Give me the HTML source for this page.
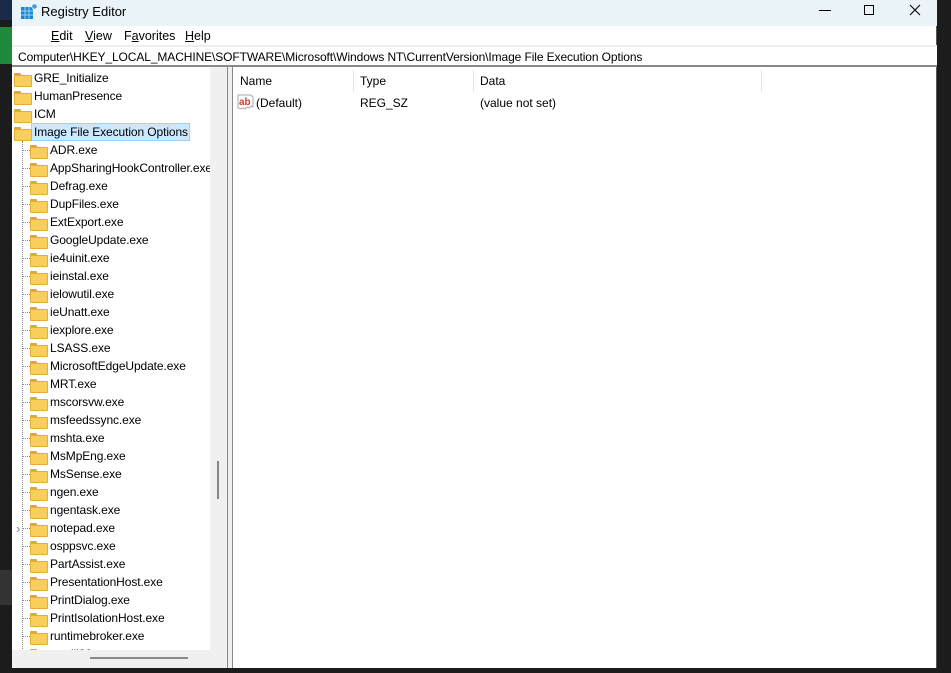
<!DOCTYPE html>
<html><head><meta charset="utf-8"><style>
*{margin:0;padding:0;box-sizing:border-box}
body{width:951px;height:673px;overflow:hidden;background:#1c1c1c;font-family:"Liberation Sans",sans-serif;font-size:12px;color:#000;position:relative}
.a{position:absolute}
.row{position:absolute;height:18px;line-height:18px;white-space:nowrap;letter-spacing:-0.1px}
.f{position:absolute;width:16px;height:12px;top:4px}
.f:before{content:"";position:absolute;left:0;top:0;width:7px;height:3px;background:#e0a82a;border-radius:1px 1px 0 0}
.f:after{content:"";position:absolute;left:0;top:2px;width:16px;height:10px;background:#f8cf5a;border:1px solid #e2ae38;border-radius:1px}
.dot{position:absolute;height:1px;width:7px;border-top:1px dotted #888}
</style></head><body>
<div class="a" style="left:0;top:0;width:12px;height:20px;background:#1a2a4a"></div>
<div class="a" style="left:0;top:27px;width:12px;height:37px;background:#1f8a3c"></div>
<div class="a" style="left:0;top:570px;width:12px;height:35px;background:#333"></div>
<div class="a" style="left:12px;top:0;width:925px;height:668px;background:#fff;border-right:1px solid #555"></div>
<div class="a" style="left:12px;top:0;width:925px;height:26px;background:#eaf3f7"></div>
<svg class="a" style="left:20px;top:3px" width="18" height="18" viewBox="0 0 18 18">
<rect x="1" y="4" width="12" height="12" fill="#1a86d0"/>
<path d="M1 8h12M1 12h12M5 4v12M9 4v12" stroke="#9fd3f5" stroke-width="1"/>
<circle cx="14.5" cy="3.5" r="2.8" fill="#3aa0e8" stroke="#fff" stroke-width="0.8"/>
</svg>
<div class="a" style="left:41px;top:4px;font-size:13px">Registry Editor</div>
<div class="a" style="left:819px;top:10px;width:12px;height:1px;background:#000"></div>
<div class="a" style="left:864px;top:5px;width:10px;height:10px;border:1px solid #000"></div>
<svg class="a" style="left:909px;top:4px" width="12" height="12"><path d="M1 1L11 11M11 1L1 11" stroke="#000" stroke-width="1.1"/></svg>
<div class="a" style="left:51px;top:29px;font-size:12.5px"><u>E</u>dit</div>
<div class="a" style="left:85px;top:29px;font-size:12.5px"><u>V</u>iew</div>
<div class="a" style="left:124px;top:29px;font-size:12.5px">F<u>a</u>vorites</div>
<div class="a" style="left:185px;top:29px;font-size:12.5px"><u>H</u>elp</div>
<div class="a" style="left:12px;top:45px;width:925px;height:22px;background:#fff;border-top:2px solid #eee;border-bottom:2px solid #888"></div>
<div class="a" style="left:18px;top:50px;font-size:12px;letter-spacing:-0.1px">Computer\HKEY_LOCAL_MACHINE\SOFTWARE\Microsoft\Windows NT\CurrentVersion\Image File Execution Options</div>
<div class="a" style="left:12px;top:67px;width:216px;height:601px;background:#f0f0f0"></div>
<div class="a" style="left:12px;top:67px;width:198px;height:583px;background:#fff;overflow:hidden" id="t">
<div class="a" style="left:10px;top:74px;height:510px;border-left:1px dotted #888"></div>
<div class="a" style="left:19px;top:56px;width:159px;height:18px;background:#cce8ff;border:1px solid #99d1ff"></div>
<div class="row" style="left:2px;top:2px"><span class="f" style="left:0"></span><span style="position:absolute;left:20px">GRE_Initialize</span></div>
<div class="row" style="left:2px;top:20px"><span class="f" style="left:0"></span><span style="position:absolute;left:20px">HumanPresence</span></div>
<div class="row" style="left:2px;top:38px"><span class="f" style="left:0"></span><span style="position:absolute;left:20px">ICM</span></div>
<div class="row" style="left:2px;top:56px"><span class="f" style="left:0"></span><span style="position:absolute;left:20px">Image File Execution Options</span></div>
</div>
<div class="a" style="left:217px;top:461px;width:2px;height:38px;background:#888"></div>
<div class="a" style="left:90px;top:657px;width:98px;height:2px;background:#888"></div>
<div class="a" style="left:227px;top:67px;width:1px;height:601px;background:#888"></div>
<div class="a" style="left:228px;top:67px;width:4px;height:601px;background:#f0f0f0"></div>
<div class="a" style="left:232px;top:67px;width:1px;height:601px;background:#888"></div>
<div class="a" style="left:240px;top:74px">Name</div>
<div class="a" style="left:353px;top:70px;width:1px;height:22px;background:#e5e5e5"></div>
<div class="a" style="left:360px;top:74px">Type</div>
<div class="a" style="left:473px;top:70px;width:1px;height:22px;background:#e5e5e5"></div>
<div class="a" style="left:480px;top:74px">Data</div>
<div class="a" style="left:761px;top:70px;width:1px;height:22px;background:#e5e5e5"></div>
<svg class="a" style="left:237px;top:94px" width="18" height="16" viewBox="0 0 18 16"><path d="M1 1h13l2 2v10l-2-1-2 2-2-1-2 2-2-1-2 1-3-1z" fill="#fff" stroke="#aaa"/><text x="2" y="11" font-family="Liberation Sans" font-size="10" font-weight="bold" fill="#d0402a">ab</text></svg>
<div class="a" style="left:256px;top:96px">(Default)</div>
<div class="a" style="left:360px;top:96px">REG_SZ</div>
<div class="a" style="left:480px;top:96px">(value not set)</div>
<script>
var n=["ADR.exe","AppSharingHookController.exe","Defrag.exe","DupFiles.exe","ExtExport.exe","GoogleUpdate.exe","ie4uinit.exe","ieinstal.exe","ielowutil.exe","ieUnatt.exe","iexplore.exe","LSASS.exe","MicrosoftEdgeUpdate.exe","MRT.exe","mscorsvw.exe","msfeedssync.exe","mshta.exe","MsMpEng.exe","MsSense.exe","ngen.exe","ngentask.exe","notepad.exe","osppsvc.exe","PartAssist.exe","PresentationHost.exe","PrintDialog.exe","PrintIsolationHost.exe","runtimebroker.exe","rundll32.exe"];
var t=document.getElementById('t'),h='';
n.forEach(function(s,i){var y=74+18*i;
h+='<div class="dot" style="left:11px;top:'+(y+9)+'px"></div>';
if(s=="notepad.exe")h+='<div class="a" style="left:4px;top:'+(y+2)+'px;color:#888;font-size:13px">&#x203A;</div>';
h+='<div class="row" style="left:18px;top:'+y+'px"><span class="f" style="left:0"></span><span style="position:absolute;left:20px">'+s+'</span></div>';});
t.insertAdjacentHTML('beforeend',h);
</script>
</body></html>
